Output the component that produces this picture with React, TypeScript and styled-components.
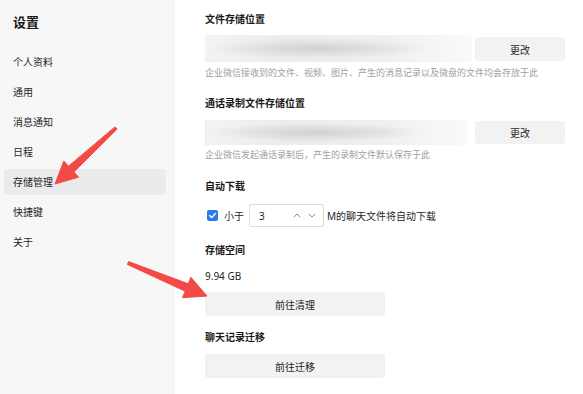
import styled, { createGlobalStyle } from "styled-components";

const GlobalStyle = createGlobalStyle`
  html, body {
    margin: 0;
    padding: 0;
  }
  body {
    font-family: "Noto Sans", "Noto Sans CJK SC", sans-serif;
    background: #ffffff;
    color: #1f1f1f;
  }
  * {
    box-sizing: border-box;
  }
`;

const menuItems = ["个人资料", "通用", "消息通知", "日程", "存储管理", "快捷键", "关于"];

function App() {
    return (
        <>
            <GlobalStyle />
            <Page>
                <Sidebar>
                    <SideTitle>设置</SideTitle>
                    <Menu>
                        {menuItems.map((item) => (
                            <MenuItem key={item} $active={item === "存储管理"}>{item}</MenuItem>
                        ))}
                    </Menu>
                </Sidebar>

                <Content>
                    <Heading $mt={0}>文件存储位置</Heading>
                    <PathRow $mt={9}>
                        <PathBox $w={267} $h={27} />
                        <ChangeButton $h={24} $offset={2}>更改</ChangeButton>
                    </PathRow>
                    <Desc $mt={4}>企业微信接收到的文件、视频、图片、产生的消息记录以及微盘的文件均会存放于此</Desc>

                    <Heading $mt={16}>通话录制文件存储位置</Heading>
                    <PathRow $mt={10}>
                        <PathBox $w={263} $h={25} $edge />
                        <ChangeButton $h={23} $offset={1} $gap={7}>更改</ChangeButton>
                    </PathRow>
                    <Desc $mt={3}>企业微信发起通话录制后，产生的录制文件默认保存于此</Desc>

                    <Heading $mt={17}>自动下载</Heading>
                    <DownloadRow>
                        <CheckBox>
                            <svg width="9" height="9" viewBox="0 0 9 9">
                                <polyline points="1.6,4.6 3.7,6.6 7.4,2.6" fill="none" stroke="#fff" strokeWidth="1.4" strokeLinecap="round" strokeLinejoin="round" />
                            </svg>
                        </CheckBox>
                        <RowText $ml={6}>小于</RowText>
                        <NumberInput>
                            <NumberValue>3</NumberValue>
                            <Spinner>
                                <svg width="8" height="5" viewBox="0 0 8 5">
                                    <polyline points="0.8,4.2 4,1 7.2,4.2" fill="none" stroke="#8a8a8a" strokeWidth="1" />
                                </svg>
                                <svg width="8" height="5" viewBox="0 0 8 5">
                                    <polyline points="0.8,0.8 4,4 7.2,0.8" fill="none" stroke="#8a8a8a" strokeWidth="1" />
                                </svg>
                            </Spinner>
                        </NumberInput>
                        <RowText $ml={3}>M的聊天文件将自动下载</RowText>
                    </DownloadRow>

                    <Heading $mt={16}>存储空间</Heading>
                    <SizeText>9.94 GB</SizeText>
                    <WideButton $mt={9}>前往清理</WideButton>

                    <Heading $mt={14}>聊天记录迁移</Heading>
                    <WideButton $mt={10}>前往迁移</WideButton>
                </Content>

                <ArrowLayer width="583" height="394" viewBox="0 0 583 394">
                    <polygon
                        points="115,126.9 117,129.1 73.9,172 78.6,177.2 55,184 63.8,161 68.5,166.2"
                        fill="#f24a45"
                        stroke="#f24a45"
                        strokeWidth="1"
                        strokeLinejoin="round"
                    />
                    <polygon
                        points="128.6,261.6 127.4,264.4 185.2,291.2 182.5,297.7 207,296 190.9,277.3 188.2,283.8"
                        fill="#f24a45"
                        stroke="#f24a45"
                        strokeWidth="1"
                        strokeLinejoin="round"
                    />
                </ArrowLayer>
            </Page>
        </>
    );
}

export default App;

const Page = styled.div`
    position: relative;
    display: flex;
    width: 583px;
    height: 394px;
    overflow: hidden;
    background: #ffffff;
`;

const Sidebar = styled.div`
    width: 175px;
    flex-shrink: 0;
    background: #f7f7f7;
    padding: 12px 9px 0 4px;
`;

const SideTitle = styled.div`
    padding-left: 9px;
    font-family: "Noto Sans CJK SC", sans-serif;
    font-size: 13px;
    font-weight: 700;
    line-height: 20px;
    color: #1a1a1a;
`;

const Menu = styled.div`
    display: flex;
    flex-direction: column;
    gap: 4px;
    margin-top: 17px;
`;

const MenuItem = styled.div<{ $active?: boolean }>`
    height: 26px;
    line-height: 26px;
    padding-left: 9px;
    border-radius: 4px;
    font-family: "Noto Sans CJK SC", sans-serif;
    font-size: 10px;
    color: #1f1f1f;
    background: ${({ $active }) => ($active ? "#ebebed" : "transparent")};
`;

const Content = styled.div`
    flex: 1;
    display: flex;
    flex-direction: column;
    align-items: flex-start;
    padding: 12px 0 0 30px;
`;

const Heading = styled.div<{ $mt: number }>`
    margin-top: ${({ $mt }) => $mt}px;
    font-family: "Noto Sans CJK SC", sans-serif;
    font-size: 10px;
    font-weight: 700;
    line-height: 14px;
    color: #1a1a1a;
`;

const PathRow = styled.div<{ $mt: number }>`
    display: flex;
    align-items: flex-start;
    margin-top: ${({ $mt }) => $mt}px;
`;

const PathBox = styled.div<{ $w: number; $h: number; $edge?: boolean }>`
    width: ${({ $w }) => $w}px;
    height: ${({ $h }) => $h}px;
    border-left: ${({ $edge }) => ($edge ? "1px solid #e6e6e6" : "none")};
    background:
        radial-gradient(ellipse 42% 38% at 42% 50%, rgba(200, 200, 200, 0.75), rgba(220, 220, 220, 0) 100%),
        linear-gradient(90deg, #f3f3f3 0%, #ececec 30%, #f0f0f0 70%, #fafafa 100%);
`;

const ChangeButton = styled.div<{ $h: number; $offset: number; $gap?: number }>`
    width: 90px;
    height: ${({ $h }) => $h}px;
    margin-top: ${({ $offset }) => $offset}px;
    margin-left: ${({ $gap }) => $gap ?? 3}px;
    display: flex;
    align-items: center;
    justify-content: center;
    border-radius: 3px;
    background: #f2f2f2;
    font-family: "Noto Sans CJK SC", sans-serif;
    font-size: 10px;
    color: #1f1f1f;
`;

const Desc = styled.div<{ $mt: number }>`
    margin-top: ${({ $mt }) => $mt}px;
    font-family: "Noto Sans CJK SC", sans-serif;
    font-size: 9px;
    line-height: 14px;
    color: #a0a0a0;
    white-space: nowrap;
`;

const DownloadRow = styled.div`
    display: flex;
    align-items: center;
    margin-top: 11px;
    height: 23px;
    padding-left: 2px;
`;

const CheckBox = styled.div`
    width: 11px;
    height: 11px;
    border-radius: 2px;
    background: #2d7be5;
    display: flex;
    align-items: center;
    justify-content: center;
`;

const RowText = styled.span<{ $ml: number }>`
    margin-left: ${({ $ml }) => $ml}px;
    font-family: "Noto Sans", "Noto Sans CJK SC", sans-serif;
    font-size: 10px;
    color: #1f1f1f;
`;

const NumberInput = styled.div`
    width: 75px;
    height: 23px;
    margin-left: 5px;
    display: flex;
    align-items: center;
    justify-content: space-between;
    padding: 0 7px 0 9px;
    border: 1px solid #dcdcdc;
    border-radius: 2px;
    background: #ffffff;
`;

const NumberValue = styled.span`
    font-family: "Noto Sans", sans-serif;
    font-size: 10px;
    color: #1f1f1f;
`;

const Spinner = styled.div`
    display: flex;
    align-items: center;
    gap: 7px;
`;

const SizeText = styled.div`
    margin-top: 12px;
    font-family: "Noto Sans", sans-serif;
    font-size: 10px;
    line-height: 14px;
    color: #1f1f1f;
`;

const WideButton = styled.div<{ $mt: number }>`
    width: 180px;
    height: 24px;
    margin-top: ${({ $mt }) => $mt}px;
    display: flex;
    align-items: center;
    justify-content: center;
    border-radius: 3px;
    background: #f2f2f2;
    font-family: "Noto Sans CJK SC", sans-serif;
    font-size: 10px;
    color: #1f1f1f;
`;

const ArrowLayer = styled.svg`
    position: absolute;
    top: 0;
    left: 0;
    pointer-events: none;
`;
